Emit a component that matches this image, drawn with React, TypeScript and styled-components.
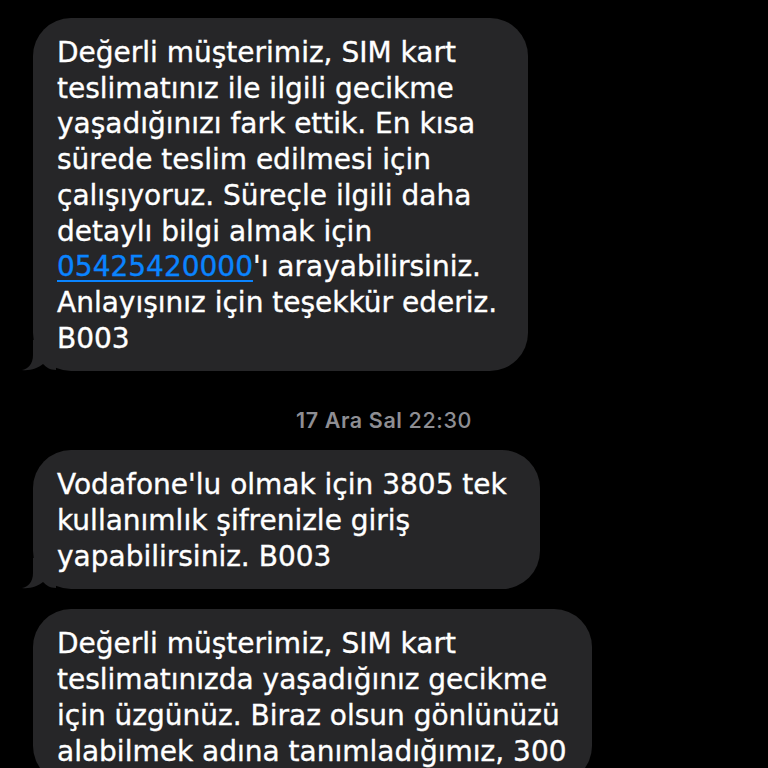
import React from "react";
import styled, { createGlobalStyle } from "styled-components";

const Global = createGlobalStyle`
  html, body { margin: 0; padding: 0; background: #000; }
  body { font-family: "DejaVu Sans", "Liberation Sans", sans-serif; -webkit-font-smoothing: antialiased; }
`;

const Thread = styled.div`
  display: flex;
  flex-direction: column;
  align-items: flex-start;
  padding: 18px 0 0 33px;
  background: #000;
  min-height: 100vh;
  box-sizing: border-box;
`;

const Bubble = styled.div<{ $w: number; $mt?: number }>`
  position: relative;
  box-sizing: border-box;
  width: ${(p) => p.$w}px;
  margin-top: ${(p) => p.$mt ?? 0}px;
  padding: 17px 20px 15px 24px;
  background: #262628;
  border-radius: 38px;
  color: #fff;
  font-size: 28px;
  line-height: 35.7px;
  -webkit-text-stroke: 0.35px #fff;
`;

const Line = styled.div`
  white-space: nowrap;
`;

const Link = styled.span`
  color: #0a84ff;
  -webkit-text-stroke: 0.35px #0a84ff;
  text-decoration: underline;
  text-decoration-thickness: 2px;
  text-underline-offset: 4px;
`;

const TailSvg = styled.svg`
  position: absolute;
  left: -11px;
  bottom: 0;
  overflow: visible;
`;

const Stamp = styled.div`
  align-self: center;
  margin: 37px 0 18px;
  margin-left: -33px;
  color: #8e8e93;
  font-family: Inter, "Liberation Sans", sans-serif;
  font-size: 21.5px;
  line-height: 24px;
  font-weight: 600;
  letter-spacing: 0.6px;
`;

const Time = styled.span`
  font-weight: 500;
`;

const Tail = () => (
  <TailSvg width="34" height="31" viewBox="0 0 34 31">
    <path
      d="M11 0 L11 15 C11 24 6 29 0 30 C8 31 16 28 21 24 C24 27 28 30 34 30 L34 0 Z"
      fill="#262628"
    />
  </TailSvg>
);

export default function App() {
  return (
    <>
      <Global />
      <Thread>
        <Bubble $w={495}>
          <Line>Değerli müşterimiz, SIM kart</Line>
          <Line>teslimatınız ile ilgili gecikme</Line>
          <Line>yaşadığınızı fark ettik. En kısa</Line>
          <Line>sürede teslim edilmesi için</Line>
          <Line>çalışıyoruz. Süreçle ilgili daha</Line>
          <Line>detaylı bilgi almak için</Line>
          <Line>
            <Link>05425420000</Link>'ı arayabilirsiniz.
          </Line>
          <Line>Anlayışınız için teşekkür ederiz.</Line>
          <Line>B003</Line>
          <Tail />
        </Bubble>
        <Stamp>
          17 Ara Sal <Time>22:30</Time>
        </Stamp>
        <Bubble $w={507}>
          <Line>Vodafone'lu olmak için 3805 tek</Line>
          <Line>kullanımlık şifrenizle giriş</Line>
          <Line>yapabilirsiniz. B003</Line>
          <Tail />
        </Bubble>
        <Bubble $w={559} $mt={20}>
          <Line>Değerli müşterimiz, SIM kart</Line>
          <Line>teslimatınızda yaşadığınız gecikme</Line>
          <Line>için üzgünüz. Biraz olsun gönlünüzü</Line>
          <Line>alabilmek adına tanımladığımız, 300</Line>
        </Bubble>
      </Thread>
    </>
  );
}
